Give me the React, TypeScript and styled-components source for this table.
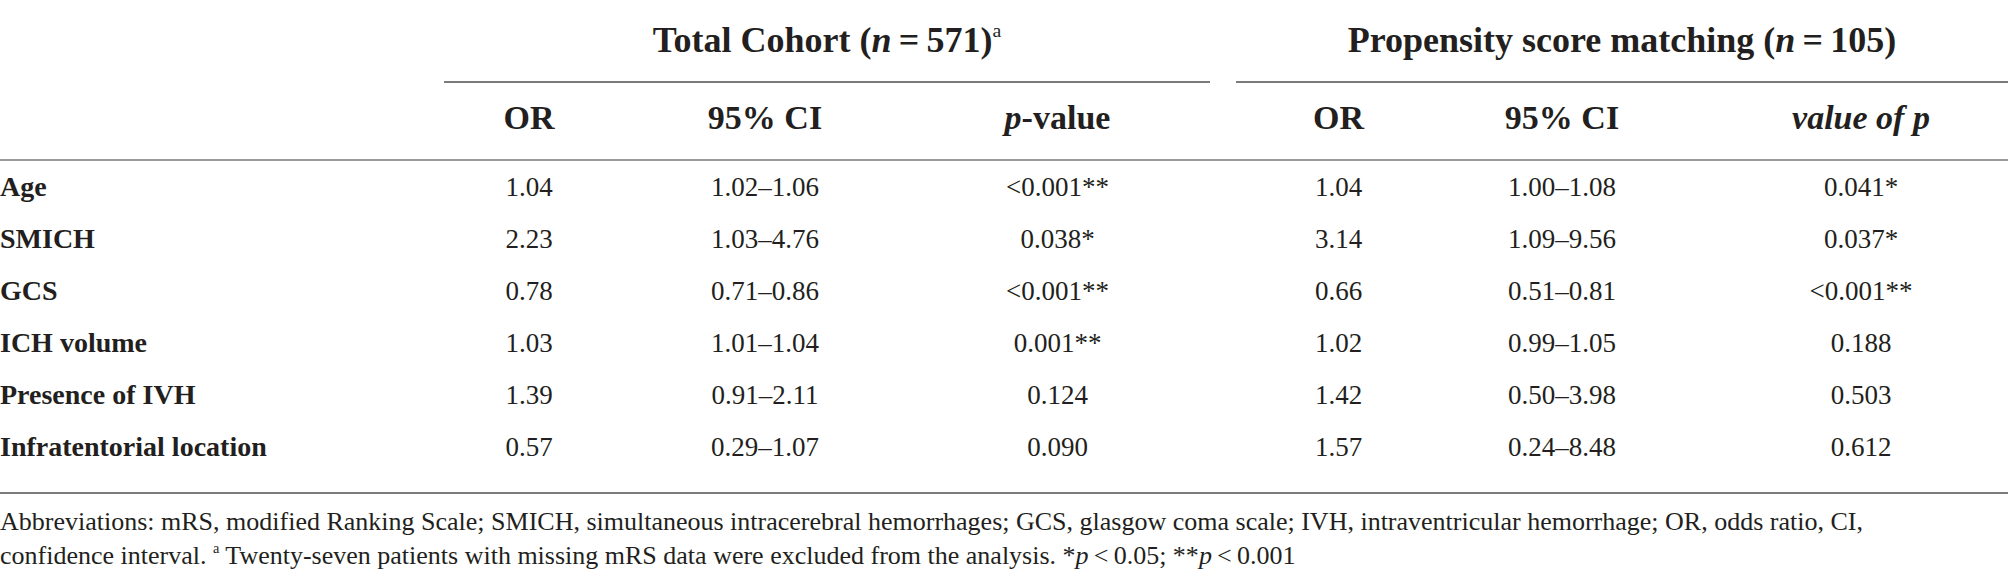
import React from 'react'
import styled, { createGlobalStyle } from 'styled-components'

const GlobalStyle = createGlobalStyle`
  html, body {
    margin: 0;
    padding: 0;
    background: #ffffff;
  }
  body {
    font-family: 'Liberation Serif', 'Times New Roman', serif;
    color: #231f20;
  }
`

// column template shared by every row of the table
const COLUMNS = '444px 170px 302px 307px 255px 168px 1fr'

const SHIFTS = [0, 0, 0, -12, -12, 0, 34]

const Wrapper = styled.div`
  width: 2008px;
`

const Row = styled.div`
  display: grid;
  grid-template-columns: ${COLUMNS};
`

const GroupHeading = styled.div<{ $side: 'left' | 'right' }>`
  grid-column: span 3;
  text-align: center;
  font-size: 36px;
  font-weight: 700;
  line-height: 40px;
  padding: 20px 0 21px;
  border-bottom: 2px solid #7b7b7b;
  margin-left: ${({ $side }) => ($side === 'right' ? '13px' : '0')};
  margin-right: ${({ $side }) => ($side === 'left' ? '13px' : '0')};
`

const HeadRow = styled(Row)`
  border-bottom: 2px solid #9a9a9a;
`

const HeadCell = styled.div<{ $shift?: number }>`
  text-align: center;
  font-size: 34px;
  font-weight: 700;
  line-height: 40px;
  padding-top: 15px;
  padding-bottom: 21px;
  padding-left: ${({ $shift = 0 }) => Math.max($shift, 0) * 2}px;
  padding-right: ${({ $shift = 0 }) => Math.max(-$shift, 0) * 2}px;
`

const Body = styled.div`
  padding-bottom: 19px;
  border-bottom: 2px solid #7b7b7b;
`

const Label = styled.div`
  font-size: 28px;
  font-weight: 700;
  line-height: 52px;
  white-space: nowrap;
`

const Value = styled.div<{ $shift?: number }>`
  font-size: 27px;
  line-height: 52px;
  text-align: center;
  white-space: nowrap;
  padding-left: ${({ $shift = 0 }) => Math.max($shift, 0) * 2}px;
  padding-right: ${({ $shift = 0 }) => Math.max(-$shift, 0) * 2}px;
`

const Footnote = styled.p`
  margin: 0;
  padding-top: 11px;
  font-size: 26px;
  line-height: 34px;
  width: 1960px;
`

const Sup = styled.sup`
  font-size: 0.55em;
  line-height: 0;
  vertical-align: 0.75em;
  font-weight: 400;
`

const Ital = styled.i`
  font-style: italic;
`

const rows: [string, string, string, string, string, string, string][] = [
  ['Age', '1.04', '1.02–1.06', '<0.001**', '1.04', '1.00–1.08', '0.041*'],
  ['SMICH', '2.23', '1.03–4.76', '0.038*', '3.14', '1.09–9.56', '0.037*'],
  ['GCS', '0.78', '0.71–0.86', '<0.001**', '0.66', '0.51–0.81', '<0.001**'],
  ['ICH volume', '1.03', '1.01–1.04', '0.001**', '1.02', '0.99–1.05', '0.188'],
  ['Presence of IVH', '1.39', '0.91–2.11', '0.124', '1.42', '0.50–3.98', '0.503'],
  ['Infratentorial location', '0.57', '0.29–1.07', '0.090', '1.57', '0.24–8.48', '0.612'],
]

const App: React.FC = () => {
  return (
    <Wrapper>
      <GlobalStyle />
      <Row>
        <div />
        <GroupHeading $side="left">
          Total Cohort (<Ital>n</Ital>{'\u2009=\u2009'}571)<Sup>a</Sup>
        </GroupHeading>
        <GroupHeading $side="right">
          Propensity score matching (<Ital>n</Ital>{'\u2009=\u2009'}105)
        </GroupHeading>
      </Row>

      <HeadRow>
        <div />
        <HeadCell $shift={SHIFTS[1]}>OR</HeadCell>
        <HeadCell $shift={SHIFTS[2]}>95% CI</HeadCell>
        <HeadCell $shift={SHIFTS[3]}>
          <Ital>p</Ital>-value
        </HeadCell>
        <HeadCell $shift={SHIFTS[4]}>OR</HeadCell>
        <HeadCell $shift={SHIFTS[5]}>95% CI</HeadCell>
        <HeadCell $shift={SHIFTS[6]}>
          <Ital>value of p</Ital>
        </HeadCell>
      </HeadRow>

      <Body>
        {rows.map((r) => (
          <Row key={r[0]}>
            <Label>{r[0]}</Label>
            {r.slice(1).map((v, i) => (
              <Value key={i} $shift={SHIFTS[i + 1]}>
                {v}
              </Value>
            ))}
          </Row>
        ))}
      </Body>

      <Footnote>
        Abbreviations: mRS, modified Ranking Scale; SMICH, simultaneous intracerebral hemorrhages; GCS, glasgow
        coma scale; IVH, intraventricular hemorrhage; OR, odds ratio, CI,
        <br />
        confidence interval. <Sup>a</Sup> Twenty-seven patients with missing mRS data were excluded from the
        analysis. *<Ital>p</Ital>{'\u2009<\u2009'}0.05; **<Ital>p</Ital>{'\u2009<\u2009'}0.001
      </Footnote>
    </Wrapper>
  )
}

export default App
